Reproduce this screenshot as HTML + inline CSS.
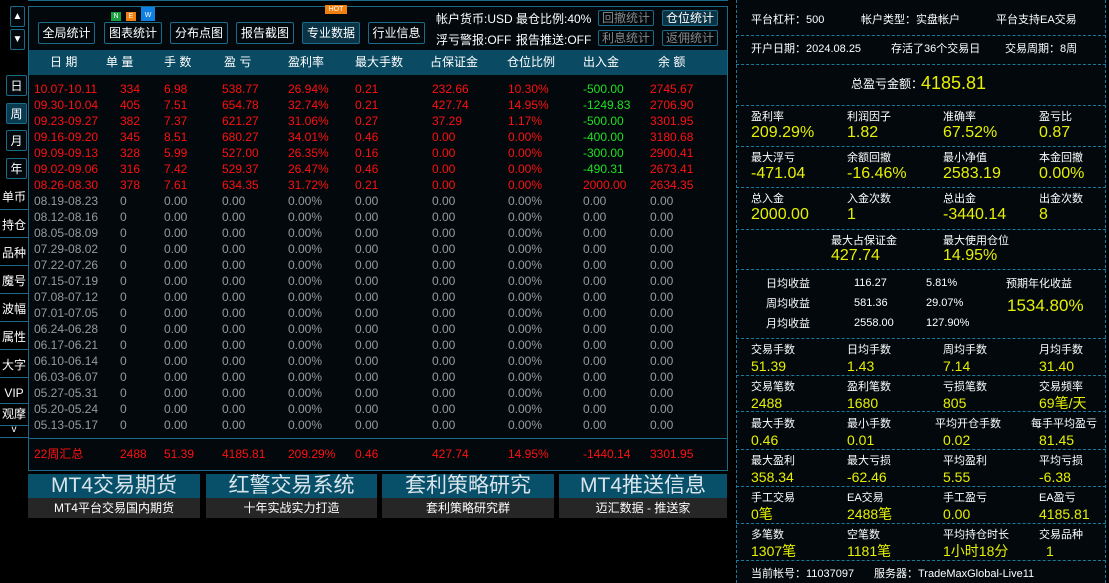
<!DOCTYPE html>
<html><head><meta charset="utf-8"><style>
*{margin:0;padding:0;box-sizing:border-box}
body{width:1109px;height:583px;background:#000;position:relative;overflow:hidden;font-family:"Liberation Sans","Noto Sans CJK SC",sans-serif;color:#fff}
.a{position:absolute;white-space:nowrap}
.btn{position:absolute;border:1px solid #1a6a8a;border-radius:2px;background:#02080c;color:#fff;font-size:12px;text-align:center;line-height:20px;height:22px;white-space:nowrap}
.sb{position:absolute;left:0;width:28px;font-size:12px;text-align:center;border-bottom:1px solid #1a6a8a;height:24px;line-height:22px}
.r{position:absolute;left:0;width:730px;height:16px;font-size:12px;line-height:16px;color:#9a9a9a;white-space:nowrap}
.r span{position:absolute;white-space:nowrap}
.red{color:#ff1010!important}
.grn{color:#20e020}
.rl{position:absolute;font-size:11px;line-height:14px;color:#fff;white-space:nowrap}
.rv{position:absolute;font-size:16px;line-height:18px;color:#e6f000;white-space:nowrap}
.dl{position:absolute;left:736px;width:370px;border-top:1px dashed #1a7a9a}
.ban{position:absolute;top:474px;height:44px;text-align:center}
.ban b{display:block;height:24px;background:#08506a;color:#d8e4ea;font-weight:normal;font-size:21px;line-height:24px}
.ban i{display:block;height:20px;background:#262626;color:#fff;font-style:normal;font-size:12px;line-height:20px}
</style></head><body>
<div class="btn" style="left:10px;top:6px;width:15px;height:21px;font-size:10px">▲</div>
<div class="btn" style="left:10px;top:29px;width:15px;height:21px;font-size:10px">▼</div>
<div class="btn" style="left:6px;top:75px;width:21px;height:21px">日</div>
<div class="btn" style="left:6px;top:103px;width:21px;height:21px;background:#0a3a50">周</div>
<div class="btn" style="left:6px;top:130px;width:21px;height:21px">月</div>
<div class="btn" style="left:6px;top:158px;width:21px;height:21px">年</div>
<div class="sb" style="top:186px">单币</div>
<div class="sb" style="top:214px">持仓</div>
<div class="sb" style="top:242px">品种</div>
<div class="sb" style="top:270px">魔号</div>
<div class="sb" style="top:298px">波幅</div>
<div class="sb" style="top:326px">属性</div>
<div class="sb" style="top:354px">大字</div>
<div class="sb" style="top:382px;height:22px;line-height:22px">VIP</div>
<div class="sb" style="top:404px;height:22px;line-height:20px">观摩</div>
<div class="sb" style="top:426px;height:12px;line-height:8px;font-size:10px">v</div>

<div class="a" style="left:28px;top:6px;width:700px;height:465px;border:1px solid #1a6a8a;background:#02080c"></div>
<div class="a" style="left:28px;top:0;width:700px;height:1px;background:#1a6a8a"></div>
<div class="btn" style="left:38px;top:22px;width:57px">全局统计</div>
<div class="btn" style="left:104px;top:22px;width:58px">图表统计</div>
<div class="a" style="left:111px;top:12px;width:10px;height:9px;background:#1aa040;font-size:7px;color:#fff;text-align:center;line-height:9px">N</div>
<div class="a" style="left:126px;top:12px;width:10px;height:9px;background:#f08010;font-size:7px;color:#fff;text-align:center;line-height:9px">E</div>
<div class="a" style="left:141px;top:7px;width:14px;height:14px;background:#1080e0;font-size:7px;color:#fff;text-align:center;line-height:18px">W</div>
<div class="btn" style="left:170px;top:22px;width:58px">分布点图</div>
<div class="btn" style="left:236px;top:22px;width:58px">报告截图</div>
<div class="btn" style="left:302px;top:22px;width:58px;background:#0a3446">专业数据</div>
<div class="a" style="left:325px;top:5px;width:22px;height:9px;background:#f08010;font-size:7px;color:#fff;text-align:center;line-height:9px">HOT</div>
<div class="btn" style="left:368px;top:22px;width:57px">行业信息</div>
<div class="a" style="left:436px;top:10px;font-size:12px">帐户货币:USD</div>
<div class="a" style="left:516px;top:10px;font-size:12px">最仓比例:40%</div>
<div class="a" style="left:436px;top:31px;font-size:12px">浮亏警报:OFF</div>
<div class="a" style="left:516px;top:31px;font-size:12px">报告推送:OFF</div>
<div class="btn" style="left:598px;top:10px;width:56px;height:16px;line-height:14px;color:#888">回撤统计</div>
<div class="btn" style="left:662px;top:10px;width:56px;height:16px;line-height:14px;background:#0a3446">仓位统计</div>
<div class="btn" style="left:598px;top:30px;width:56px;height:16px;line-height:14px;color:#888">利息统计</div>
<div class="btn" style="left:662px;top:30px;width:56px;height:16px;line-height:14px;color:#888">返佣统计</div>

<div class="a" style="left:29px;top:50px;width:698px;height:25px;background:#0b4a63"></div>
<div class="r" style="top:54px;color:#fff;font-size:12px">
<span style="left:50px">日 期</span><span style="left:106px">单 量</span><span style="left:164px">手 数</span><span style="left:224px">盈 亏</span><span style="left:288px">盈利率</span><span style="left:355px">最大手数</span><span style="left:430px">占保证金</span><span style="left:507px">仓位比例</span><span style="left:583px">出入金</span><span style="left:658px">余 额</span></div>

<div id="rows"></div>
<div class="a" style="left:29px;top:438px;width:698px;height:1px;background:#1a6a8a"></div>
<div class="r red" style="top:446px"><span style="left:34px">22周汇总</span><span style="left:120px">2488</span><span style="left:164px">51.39</span><span style="left:222px">4185.81</span><span style="left:288px">209.29%</span><span style="left:355px">0.46</span><span style="left:432px">427.74</span><span style="left:508px">14.95%</span><span style="left:583px">-1440.14</span><span style="left:650px">3301.95</span></div>

<div class="ban" style="left:28px;width:172px"><b>MT4交易期货</b><i>MT4平台交易国内期货</i></div>
<div class="ban" style="left:206px;width:171px"><b>红警交易系统</b><i>十年实战实力打造</i></div>
<div class="ban" style="left:382px;width:172px"><b>套利策略研究</b><i>套利策略研究群</i></div>
<div class="ban" style="left:559px;width:168px"><b>MT4推送信息</b><i>迈汇数据 - 推送家</i></div>

<div class="a" style="left:736px;top:0;width:370px;height:583px;border-left:1px dashed #1a7a9a;border-right:1px dashed #1a7a9a;background:#02080c"></div>
<div class="dl" style="top:35px"></div><div class="dl" style="top:64px"></div><div class="dl" style="top:105px"></div><div class="dl" style="top:146px"></div><div class="dl" style="top:187px"></div><div class="dl" style="top:229px"></div><div class="dl" style="top:269px"></div><div class="dl" style="top:338px"></div><div class="dl" style="top:375px"></div><div class="dl" style="top:411px"></div><div class="dl" style="top:449px"></div><div class="dl" style="top:486px"></div><div class="dl" style="top:523px"></div><div class="dl" style="top:560px"></div>
<div class="rl" style="left:751px;top:13px">平台杠杆：500</div>
<div class="rl" style="left:861px;top:13px">帐户类型：实盘帐户</div>
<div class="rl" style="left:996px;top:13px">平台支持EA交易</div>
<div class="rl" style="left:751px;top:42px">开户日期：2024.08.25</div>
<div class="rl" style="left:891px;top:42px">存活了36个交易日</div>
<div class="rl" style="left:1005px;top:42px">交易周期：8周</div>
<div class="rl" style="left:851px;top:77px;font-size:12px">总盈亏金额：</div>
<div class="rv" style="left:921px;top:73px;font-size:18px;line-height:20px">4185.81</div>
<div id="grid"></div>
<div class="rl" style="left:831px;top:234px">最大占保证金</div><div class="rv" style="left:831px;top:247px">427.74</div>
<div class="rl" style="left:943px;top:234px">最大使用仓位</div><div class="rv" style="left:943px;top:247px">14.95%</div>
<div class="rl" style="left:766px;top:277px">日均收益</div><div class="rl" style="left:854px;top:276px">116.27</div><div class="rl" style="left:926px;top:276px">5.81%</div>
<div class="rl" style="left:766px;top:297px">周均收益</div><div class="rl" style="left:854px;top:296px">581.36</div><div class="rl" style="left:926px;top:296px">29.07%</div>
<div class="rl" style="left:766px;top:317px">月均收益</div><div class="rl" style="left:854px;top:316px">2558.00</div><div class="rl" style="left:926px;top:316px">127.90%</div>
<div class="rl" style="left:1006px;top:277px">预期年化收益</div>
<div class="rv" style="left:1007px;top:296px;font-size:17px;line-height:20px">1534.80%</div>
<div class="rl" style="left:751px;top:567px">当前帐号：11037097</div>
<div class="rl" style="left:874px;top:567px">服务器：TradeMaxGlobal-Live11</div>

<script>
var R=[["10.07-10.11","334","6.98","538.77","26.94%","0.21","232.66","10.30%","-500.00","2745.67",1],
["09.30-10.04","405","7.51","654.78","32.74%","0.21","427.74","14.95%","-1249.83","2706.90",1],
["09.23-09.27","382","7.37","621.27","31.06%","0.27","37.29","1.17%","-500.00","3301.95",1],
["09.16-09.20","345","8.51","680.27","34.01%","0.46","0.00","0.00%","-400.00","3180.68",1],
["09.09-09.13","328","5.99","527.00","26.35%","0.16","0.00","0.00%","-300.00","2900.41",1],
["09.02-09.06","316","7.42","529.37","26.47%","0.46","0.00","0.00%","-490.31","2673.41",1],
["08.26-08.30","378","7.61","634.35","31.72%","0.21","0.00","0.00%","2000.00","2634.35",2]];
var d=["08.19-08.23","08.12-08.16","08.05-08.09","07.29-08.02","07.22-07.26","07.15-07.19","07.08-07.12","07.01-07.05","06.24-06.28","06.17-06.21","06.10-06.14","06.03-06.07","05.27-05.31","05.20-05.24","05.13-05.17"];
d.forEach(function(x){R.push([x,"0","0.00","0.00","0.00%","0.00","0.00","0.00%","0.00","0.00",0])});
var L=[34,120,164,222,288,355,432,508,583,650],h="";
R.forEach(function(r,i){h+='<div class="r'+(r[10]?' red':'')+'" style="top:'+(81+i*16)+'px">';
for(var j=0;j<10;j++){var c=(j==8&&r[10]==1)?' class="grn"':'';h+='<span'+c+' style="left:'+L[j]+'px">'+r[j]+'</span>';}h+='</div>';});
document.getElementById('rows').innerHTML=h;
var G=[[110,["盈利率","209.29%"],["利润因子","1.82"],["准确率","67.52%"],["盈亏比","0.87"]],
[151,["最大浮亏","-471.04"],["余额回撤","-16.46%"],["最小净值","2583.19"],["本金回撤","0.00%"]],
[192,["总入金","2000.00"],["入金次数","1"],["总出金","-3440.14"],["出金次数","8"]],
[343,["交易手数","51.39"],["日均手数","1.43"],["周均手数","7.14"],["月均手数","31.40"]],
[380,["交易笔数","2488"],["盈利笔数","1680"],["亏损笔数","805"],["交易频率","69笔/天"]],
[417,["最大手数","0.46"],["最小手数","0.01"],["平均开仓手数","0.02"],["每手平均盈亏","81.45"]],
[454,["最大盈利","358.34"],["最大亏损","-62.46"],["平均盈利","5.55"],["平均亏损","-6.38"]],
[491,["手工交易","0笔"],["EA交易","2488笔"],["手工盈亏","0.00"],["EA盈亏","4185.81"]],
[528,["多笔数","1307笔"],["空笔数","1181笔"],["平均持仓时长","1小时18分"],["交易品种","1"]]];
var X=[751,847,943,1039],g="";
G.forEach(function(r){var y=r[0],big=(y<200);for(var j=0;j<4;j++){var x=X[j];if(y==417&&j==2)x=935;if(y==417&&j==3)x=1031;
var vx=X[j];if(y==528&&j==3)vx=1046;
g+='<div class="rl" style="left:'+x+'px;top:'+y+'px">'+r[j+1][0]+'</div><div class="rv" style="left:'+vx+'px;top:'+(y+(big?14:14))+'px;font-size:'+(big?16:14)+'px">'+r[j+1][1]+'</div>';}});
document.getElementById('grid').innerHTML=g;
</script>
</body></html>
